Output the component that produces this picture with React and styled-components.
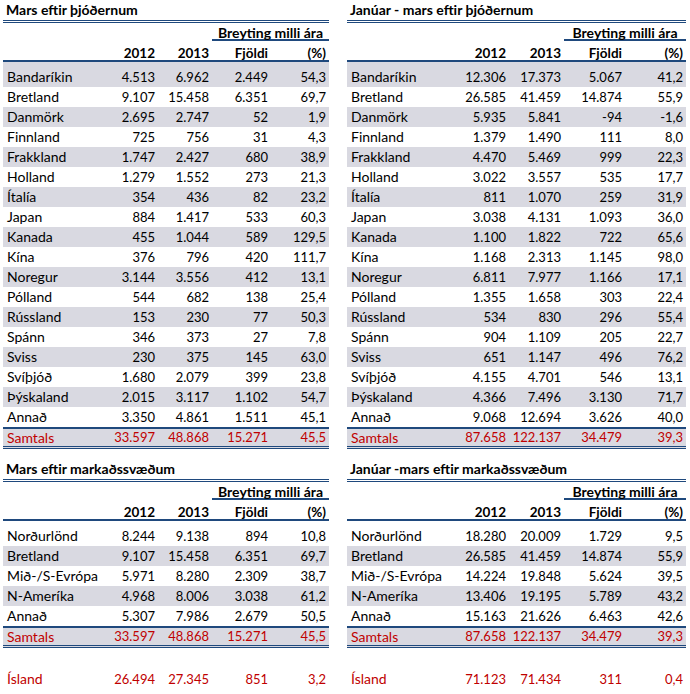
import React from 'react';
import styled, { createGlobalStyle } from 'styled-components';

const NAVY = '#1f497d';
const SHADE = '#d9d9e1';
const RED = '#c00000';

const GlobalStyle = createGlobalStyle`
  body {
    margin: 0;
    background: #fff;
  }
`;

const Page = styled.div`
  display: grid;
  grid-template-columns: 326px 339px;
  column-gap: 18px;
  padding-left: 3px;
  font-family: Lato, 'Open Sans', sans-serif;
  font-size: 13px;
  color: #000;
`;

const Panel = styled.div`
  display: flex;
  flex-direction: column;
`;

const Title = styled.div`
  height: 20px;
  line-height: 20px;
  padding-left: 3px;
  font-size: 14px;
  font-weight: 700;
  white-space: nowrap;
  border-bottom: 3px double ${NAVY};
  margin-top: ${p => p.$gap || 0}px;
`;

const Row = styled.div`
  display: grid;
  grid-template-columns: ${p => p.$cols};
  align-items: end;
  line-height: 20px;
`;

const GroupRow = styled(Row)`
  height: 18px;
`;

const HeadRow = styled(Row)`
  box-sizing: border-box;
  height: 21px;
  line-height: 14px;
  font-size: 13.5px;
  font-weight: 700;
  border-bottom: 2px solid ${NAVY};
`;

const DataRow = styled(Row)`
  height: ${p => (p.$first ? 25 : 20)}px;
  background: ${p => (p.$shaded ? SHADE : 'transparent')};
`;

const TotalRow = styled(Row)`
  height: 17px;
  line-height: 17px;
  color: ${RED};
  background: ${SHADE};
  border-top: 2px solid ${NAVY};
  border-bottom: 3px double ${NAVY};
`;

const IcelandRow = styled(Row)`
  height: 20px;
  margin-top: 21px;
  color: ${RED};
`;

const Cell = styled.div`
  padding: 0 3px;
  text-align: right;
  white-space: nowrap;
`;

const Label = styled(Cell)`
  text-align: left;
  padding-left: 4px;
  font-size: 14px;
`;

const GroupCell = styled.div`
  grid-column: 4 / span 2;
  align-self: stretch;
  display: flex;
  align-items: flex-end;
  justify-content: center;
  line-height: 12px;
  font-size: 14px;
  font-weight: 700;
  border-bottom: 2px solid ${NAVY};
`;

const nationsMars = [
  ['Bandaríkin', '4.513', '6.962', '2.449', '54,3'],
  ['Bretland', '9.107', '15.458', '6.351', '69,7'],
  ['Danmörk', '2.695', '2.747', '52', '1,9'],
  ['Finnland', '725', '756', '31', '4,3'],
  ['Frakkland', '1.747', '2.427', '680', '38,9'],
  ['Holland', '1.279', '1.552', '273', '21,3'],
  ['Ítalía', '354', '436', '82', '23,2'],
  ['Japan', '884', '1.417', '533', '60,3'],
  ['Kanada', '455', '1.044', '589', '129,5'],
  ['Kína', '376', '796', '420', '111,7'],
  ['Noregur', '3.144', '3.556', '412', '13,1'],
  ['Pólland', '544', '682', '138', '25,4'],
  ['Rússland', '153', '230', '77', '50,3'],
  ['Spánn', '346', '373', '27', '7,8'],
  ['Sviss', '230', '375', '145', '63,0'],
  ['Svíþjóð', '1.680', '2.079', '399', '23,8'],
  ['Þýskaland', '2.015', '3.117', '1.102', '54,7'],
  ['Annað', '3.350', '4.861', '1.511', '45,1'],
];

const nationsYtd = [
  ['Bandaríkin', '12.306', '17.373', '5.067', '41,2'],
  ['Bretland', '26.585', '41.459', '14.874', '55,9'],
  ['Danmörk', '5.935', '5.841', '-94', '-1,6'],
  ['Finnland', '1.379', '1.490', '111', '8,0'],
  ['Frakkland', '4.470', '5.469', '999', '22,3'],
  ['Holland', '3.022', '3.557', '535', '17,7'],
  ['Ítalía', '811', '1.070', '259', '31,9'],
  ['Japan', '3.038', '4.131', '1.093', '36,0'],
  ['Kanada', '1.100', '1.822', '722', '65,6'],
  ['Kína', '1.168', '2.313', '1.145', '98,0'],
  ['Noregur', '6.811', '7.977', '1.166', '17,1'],
  ['Pólland', '1.355', '1.658', '303', '22,4'],
  ['Rússland', '534', '830', '296', '55,4'],
  ['Spánn', '904', '1.109', '205', '22,7'],
  ['Sviss', '651', '1.147', '496', '76,2'],
  ['Svíþjóð', '4.155', '4.701', '546', '13,1'],
  ['Þýskaland', '4.366', '7.496', '3.130', '71,7'],
  ['Annað', '9.068', '12.694', '3.626', '40,0'],
];

const marketsMars = [
  ['Norðurlönd', '8.244', '9.138', '894', '10,8'],
  ['Bretland', '9.107', '15.458', '6.351', '69,7'],
  ['Mið-/S-Evrópa', '5.971', '8.280', '2.309', '38,7'],
  ['N-Ameríka', '4.968', '8.006', '3.038', '61,2'],
  ['Annað', '5.307', '7.986', '2.679', '50,5'],
];

const marketsYtd = [
  ['Norðurlönd', '18.280', '20.009', '1.729', '9,5'],
  ['Bretland', '26.585', '41.459', '14.874', '55,9'],
  ['Mið-/S-Evrópa', '14.224', '19.848', '5.624', '39,5'],
  ['N-Ameríka', '13.406', '19.195', '5.789', '43,2'],
  ['Annað', '15.163', '21.626', '6.463', '42,6'],
];

const panels = [
  {
    cols: '101px 54px 54px 59px 58px',
    nationTitle: 'Mars eftir þjóðernum',
    marketTitle: 'Mars eftir markaðssvæðum',
    nations: nationsMars,
    markets: marketsMars,
    total: ['Samtals', '33.597', '48.868', '15.271', '45,5'],
    iceland: ['Ísland', '26.494', '27.345', '851', '3,2'],
  },
  {
    cols: '105px 57px 55px 61px 61px',
    nationTitle: 'Janúar - mars eftir þjóðernum',
    marketTitle: 'Janúar -mars eftir markaðssvæðum',
    nations: nationsYtd,
    markets: marketsYtd,
    total: ['Samtals', '87.658', '122.137', '34.479', '39,3'],
    iceland: ['Ísland', '71.123', '71.434', '311', '0,4'],
  },
];

const Cells = ({ values }) => (
  <>
    <Label>{values[0]}</Label>
    {values.slice(1).map((v, i) => (
      <Cell key={i}>{v}</Cell>
    ))}
  </>
);

const Table = ({ title, cols, rows, total, firstShaded, gap }) => (
  <>
    <Title $gap={gap}>{title}</Title>
    <GroupRow $cols={cols}>
      <GroupCell>Breyting milli ára</GroupCell>
    </GroupRow>
    <HeadRow $cols={cols}>
      <Cells values={['', '2012', '2013', 'Fjöldi', '(%)']} />
    </HeadRow>
    {rows.map((r, i) => (
      <DataRow
        key={r[0]}
        $cols={cols}
        $first={i === 0}
        $shaded={(i % 2 === 0) === firstShaded}
      >
        <Cells values={r} />
      </DataRow>
    ))}
    <TotalRow $cols={cols}>
      <Cells values={total} />
    </TotalRow>
  </>
);

export default function App() {
  return (
    <>
      <GlobalStyle />
      <Page>
        {panels.map(p => (
          <Panel key={p.nationTitle}>
            <Table title={p.nationTitle} cols={p.cols} rows={p.nations} total={p.total} firstShaded />
            <Table
              title={p.marketTitle}
              cols={p.cols}
              rows={p.markets}
              total={p.total}
              firstShaded={false}
              gap={10}
            />
            <IcelandRow $cols={p.cols}>
              <Cells values={p.iceland} />
            </IcelandRow>
          </Panel>
        ))}
      </Page>
    </>
  );
}
